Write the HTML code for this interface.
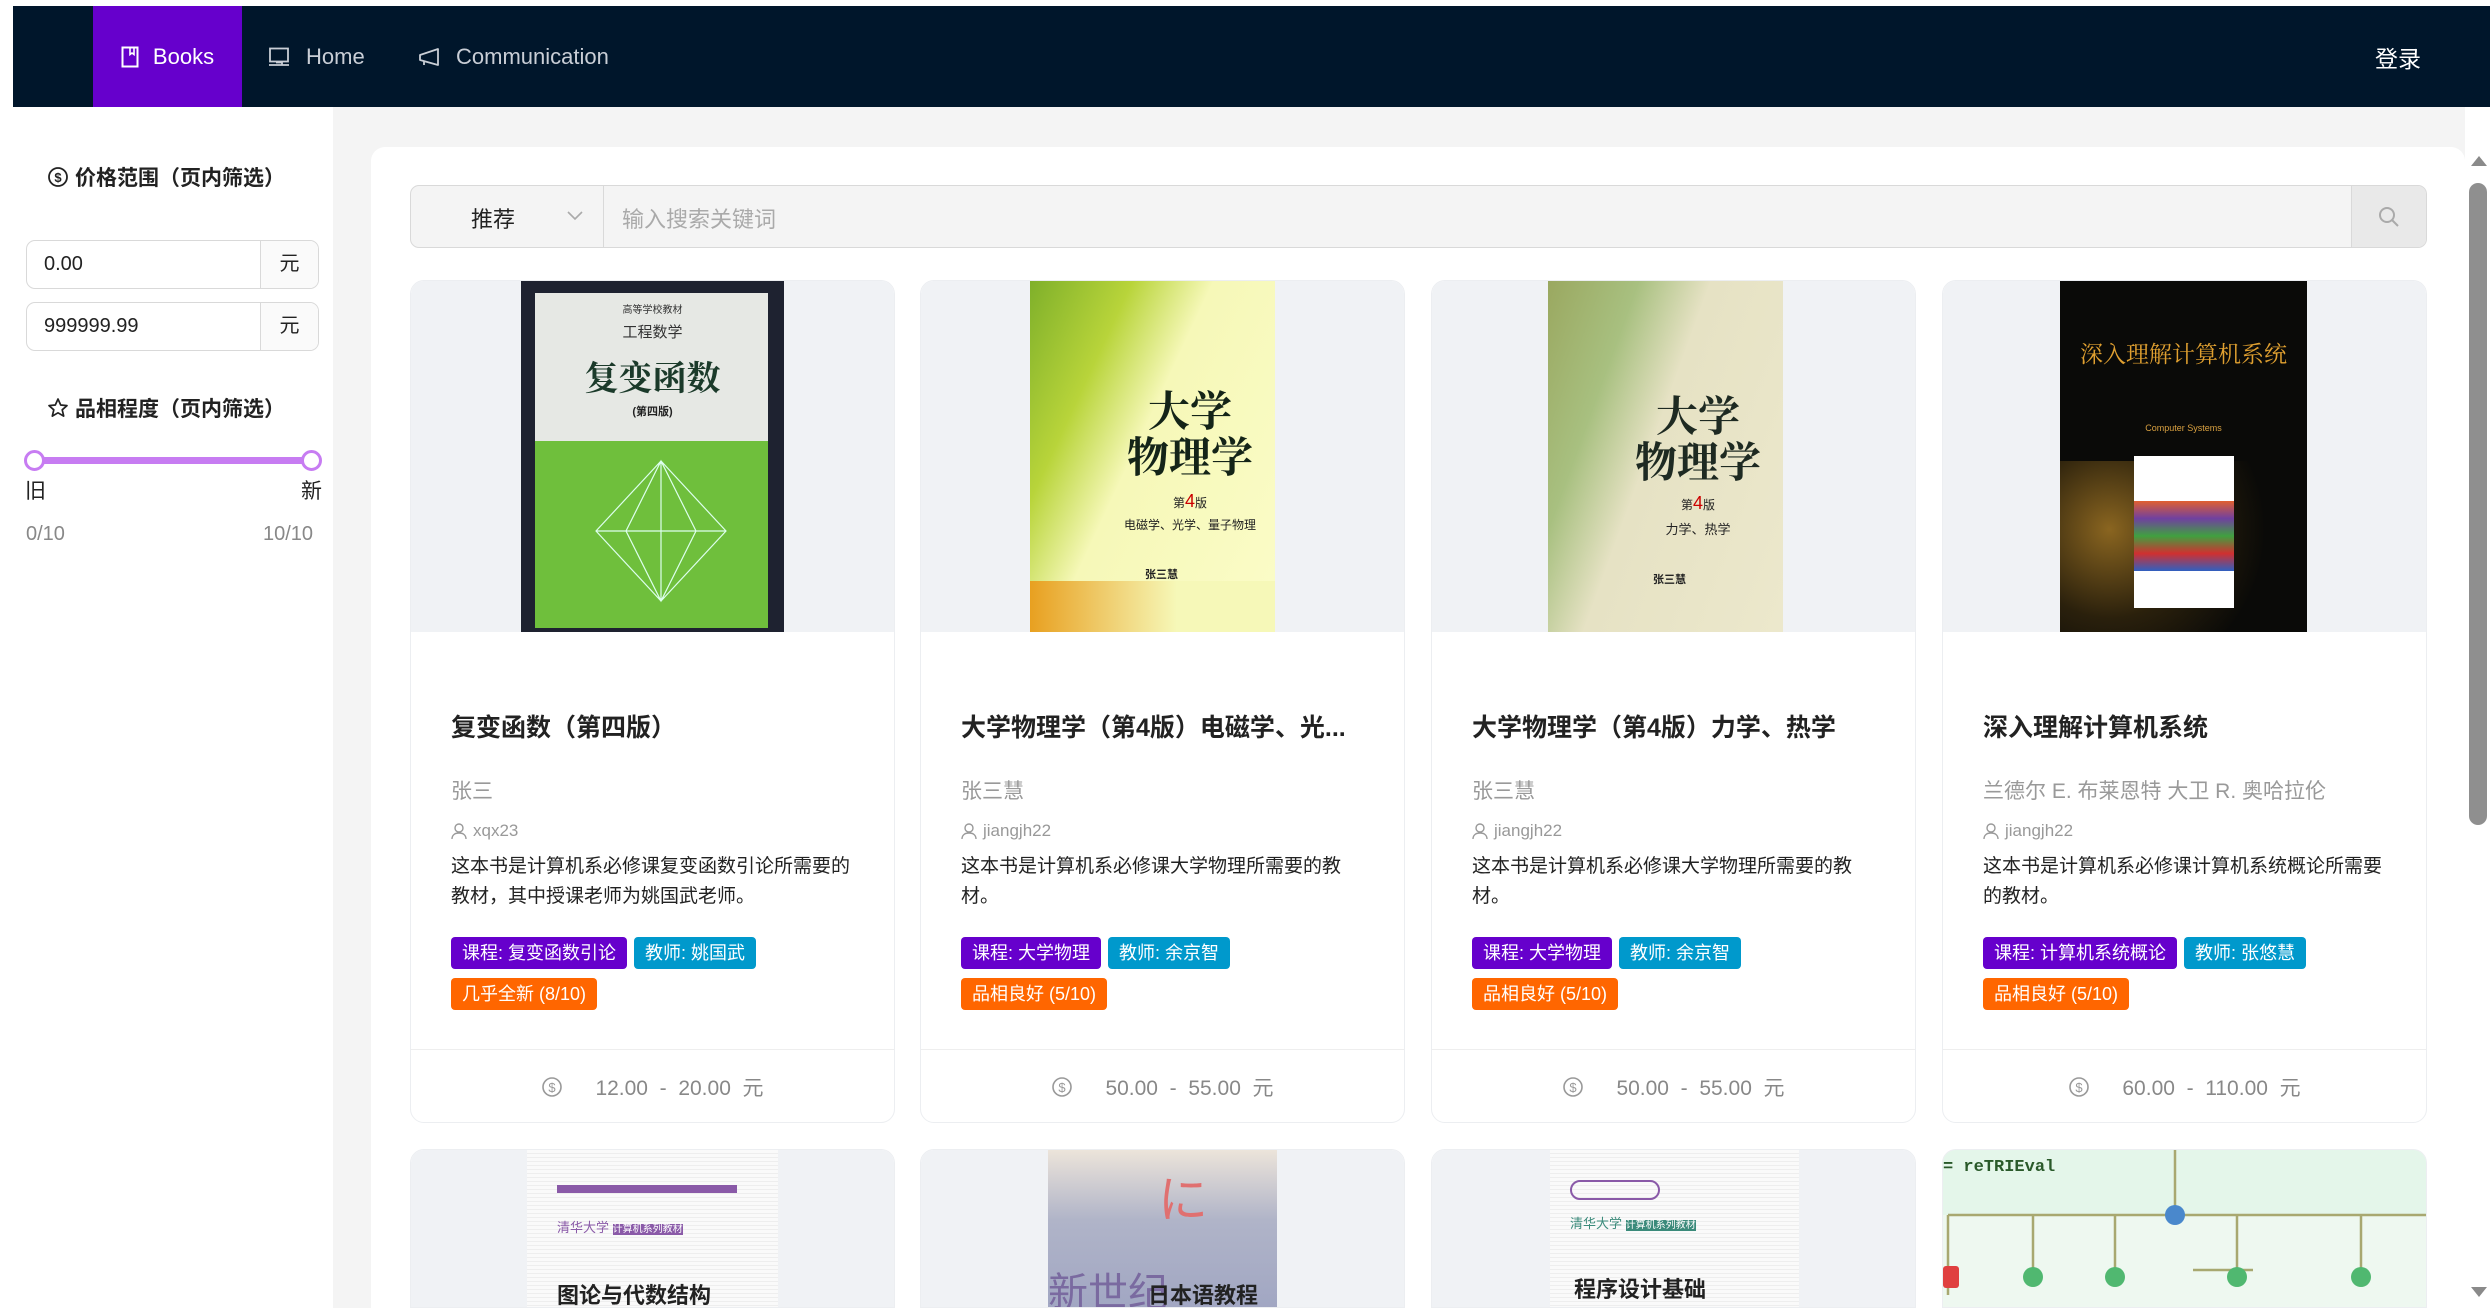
<!DOCTYPE html>
<html style="overflow:hidden;width:2492px;height:1308px"><head><meta charset="utf-8"><style>
*{box-sizing:border-box;margin:0;padding:0}
body{width:2492px;height:1308px;overflow:hidden;background:#fff;font-family:"Liberation Sans","Noto Sans CJK SC",sans-serif;position:relative;color:#222}
.abs{position:absolute}
.nav{left:13px;top:6px;width:2477px;height:101px;background:#00162b}
.navi{position:absolute;top:0;height:101px;display:flex;align-items:center;color:#c9ced6;font-size:22px}
.side{left:13px;top:107px;width:320px;height:1201px;background:#fff}
.main{left:333px;top:107px;width:2132px;height:1201px;background:#f4f4f4}
.panel{left:371px;top:147px;width:2094px;height:1161px;background:#fff;border-radius:14px 14px 0 0}
.h{font-size:21px;font-weight:bold;display:flex;align-items:center;gap:6px}
.inp{left:26px;width:293px;height:49px;border:1px solid #d9d9d9;border-radius:9px;display:flex;font-size:20px;overflow:hidden}
.inp span{flex:1;padding-left:17px;line-height:47px}
.inp b{width:58px;border-left:1px solid #d9d9d9;background:#fafafa;font-weight:normal;text-align:center;line-height:47px}
.card{width:485px;height:843px;border:1px solid #eceef1;border-radius:14px;background:#fff;overflow:hidden}
.img{position:absolute;left:0;top:0;width:100%;height:351px;background:#f0f2f5}
.cv{position:absolute;top:0;height:351px;overflow:hidden}
.t{position:absolute;left:40px;top:427px;font-size:25px;font-weight:bold;white-space:nowrap}
.au{position:absolute;left:40px;top:494px;font-size:21px;color:#999}
.se{position:absolute;left:40px;top:540px;font-size:17px;color:#999;display:flex;align-items:center;gap:6px}
.de{position:absolute;left:40px;top:571px;width:406px;font-size:19px;line-height:30px;color:#222}
.tags{position:absolute;left:40px;top:656px;width:420px;display:flex;flex-wrap:wrap;gap:9px 7px}
.tg{height:32px;line-height:32px;padding:0 11px;border-radius:4px;color:#fff;font-size:18px}
.p{background:#6600cc}.c{background:#0099cc}.o{background:#ff6600}
.ft{position:absolute;left:0;top:768px;width:100%;border-top:1px solid #eee;height:75px;display:flex;align-items:center;justify-content:center;gap:14px;color:#888;font-size:21px}
.card2{height:159px;border-radius:14px 14px 0 0}
</style></head><body>
<div class="abs nav">
  <div class="navi" style="left:80px;width:149px;background:#6600cc;color:#fff;justify-content:center;gap:14px">
    <svg width="18" height="22" viewBox="0 0 18 22"><rect x="1.5" y="1.5" width="15" height="19" fill="none" stroke="#fff" stroke-width="2"/><path d="M9 1.5v7l2-1.5 2 1.5v-7" fill="none" stroke="#fff" stroke-width="1.6"/></svg>Books</div>
  <div class="navi" style="left:255px;gap:16px"><svg width="22" height="20" viewBox="0 0 22 20"><rect x="2" y="1.5" width="18" height="13" fill="none" stroke="#c9ced6" stroke-width="1.8"/><path d="M1 18h20M8 15.5h6v2.5" fill="none" stroke="#c9ced6" stroke-width="1.8"/></svg>Home</div>
  <div class="navi" style="left:405px;gap:16px"><svg width="22" height="20" viewBox="0 0 22 20"><path d="M2 8v5l18 5V2z M6 14v4" fill="none" stroke="#c9ced6" stroke-width="1.8" stroke-linejoin="round"/></svg>Communication</div>
  <div class="navi" style="left:2362px;color:#fff;font-size:23px">登录</div>
</div>
<div class="abs side">
  <div class="abs h" style="left:34px;top:55px"><svg width="22" height="22" viewBox="0 0 22 22"><circle cx="11" cy="11" r="9" fill="none" stroke="#222" stroke-width="1.8"/><text x="11" y="16" font-size="13" text-anchor="middle" font-family="Liberation Sans" fill="#222">$</text></svg>价格范围（页内筛选）</div>
  <div class="abs inp" style="top:133px;left:13px"><span>0.00</span><b>元</b></div>
  <div class="abs inp" style="top:195px;left:13px"><span>999999.99</span><b>元</b></div>
  <div class="abs h" style="left:34px;top:286px"><svg width="22" height="22" viewBox="0 0 22 22"><path d="M11 2l2.7 6 6.3.6-4.8 4.2 1.5 6.3L11 15.8 5.3 19.1l1.5-6.3L2 8.6 8.3 8z" fill="none" stroke="#222" stroke-width="1.7" stroke-linejoin="round"/></svg>品相程度（页内筛选）</div>
  <div class="abs" style="left:22px;top:350px;width:277px;height:7px;background:#c77cf2;border-radius:3px"></div>
  <div class="abs" style="left:11px;top:343px;width:21px;height:21px;border:3px solid #c77cf2;border-radius:50%;background:#fff"></div>
  <div class="abs" style="left:288px;top:343px;width:21px;height:21px;border:3px solid #c77cf2;border-radius:50%;background:#fff"></div>
  <div class="abs" style="left:12px;top:368px;font-size:21px">旧</div>
  <div class="abs" style="left:288px;top:368px;font-size:21px">新</div>
  <div class="abs" style="left:13px;top:416px;font-size:20px;color:#888">0/10</div>
  <div class="abs" style="left:250px;top:416px;font-size:20px;color:#888">10/10</div>
</div>
<div class="abs main"></div>
<div class="abs panel"></div>
<div class="abs" style="left:410px;top:185px;width:2017px;height:63px;background:#f4f4f4;border:1px solid #d9d9d9;border-radius:9px;overflow:hidden">
  <div class="abs" style="left:60px;top:16px;font-size:22px">推荐</div>
  <svg class="abs" style="left:155px;top:24px" width="18" height="12" viewBox="0 0 18 12"><path d="M2 2l7 7 7-7" fill="none" stroke="#aaa" stroke-width="1.6"/></svg>
  <div class="abs" style="left:192px;top:0;width:1px;height:63px;background:#d9d9d9"></div>
  <div class="abs" style="left:211px;top:16px;font-size:22px;color:#aaa">输入搜索关键词</div>
  <div class="abs" style="left:1940px;top:0;width:77px;height:63px;background:#e9e9e9;border-left:1px solid #d9d9d9"></div>
  <svg class="abs" style="left:1966px;top:19px" width="24" height="24" viewBox="0 0 24 24"><circle cx="10" cy="10" r="7" fill="none" stroke="#aaa" stroke-width="2"/><path d="M15 15l6 6" stroke="#aaa" stroke-width="2"/></svg>
</div>

<!-- row 1 -->
<div class="abs card" style="left:410px;top:280px">
  <div class="img"></div>
  <div class="cv" style="left:110px;width:263px;background:#1e2230">
    <div class="abs" style="left:14px;top:12px;width:233px;height:335px;background:#e6e8e4"></div>
    <div class="abs" style="left:14px;top:160px;width:233px;height:187px;background:#6fbf3c"></div>
    <div class="abs" style="left:0;top:20px;width:263px;text-align:center;font-size:10px;color:#333">高等学校教材</div>
    <div class="abs" style="left:0;top:40px;width:263px;text-align:center;font-size:15px;color:#333">工程数学</div>
    <div class="abs" style="left:0;top:70px;width:263px;text-align:center;font-size:34px;font-weight:bold;color:#1b3a2a;font-family:'Noto Serif CJK SC',serif">复变函数</div>
    <div class="abs" style="left:0;top:122px;width:263px;text-align:center;font-size:11px;font-weight:bold">(第四版)</div>
    <svg class="abs" style="left:70px;top:175px" width="140" height="150" viewBox="0 0 140 150"><path d="M70 5L5 75 70 145 135 75z M70 5L35 75 70 145 105 75z M70 5v140 M5 75h130" fill="none" stroke="#dfe" stroke-width="1.2"/></svg>
  </div>
  <div class="t">复变函数（第四版）</div>
  <div class="au">张三</div>
  <div class="se"><svg width="16" height="17" viewBox="0 0 16 17"><circle cx="8" cy="5" r="4" fill="none" stroke="#999" stroke-width="1.4"/><path d="M1 16c0-4 3-6 7-6s7 2 7 6" fill="none" stroke="#999" stroke-width="1.4"/></svg>xqx23</div>
  <div class="de">这本书是计算机系必修课复变函数引论所需要的教材，其中授课老师为姚国武老师。</div>
  <div class="tags"><span class="tg p">课程: 复变函数引论</span><span class="tg c">教师: 姚国武</span><span class="tg o">几乎全新 (8/10)</span></div>
  <div class="ft"><svg width="22" height="22" viewBox="0 0 22 22"><circle cx="11" cy="11" r="9" fill="none" stroke="#999" stroke-width="1.6"/><text x="11" y="16" font-size="13" text-anchor="middle" fill="#999">$</text></svg><span style="margin-left:18px">12.00 &nbsp;- &nbsp;20.00 &nbsp;元</span></div>
</div>

<div class="abs card" style="left:920px;top:280px">
  <div class="img"></div>
  <div class="cv" style="left:109px;width:245px;background:linear-gradient(115deg,#7fb02a 0%,#b8d43a 25%,#f6f8b8 45%,#fbfcc8 100%)">
    <div class="abs" style="left:0;top:300px;width:245px;height:51px;background:linear-gradient(90deg,#e8a020,#f6f8b8 60%)"></div>
    <div class="abs" style="left:95px;top:105px;font-size:42px;font-weight:bold;line-height:46px;color:#142418;font-family:'Noto Serif CJK SC',serif;text-align:center;width:130px">大学<br>物理学</div>
    <div class="abs" style="left:95px;top:210px;width:130px;text-align:center;font-size:12px;color:#222">第<span style="color:#c00;font-size:18px">4</span>版</div>
    <div class="abs" style="left:85px;top:235px;width:150px;text-align:center;font-size:12px;color:#222">电磁学、光学、量子物理</div>
    <div class="abs" style="left:115px;top:285px;font-size:11px;font-weight:bold">张三慧</div>
  </div>
  <div class="t">大学物理学（第4版）电磁学、光...</div>
  <div class="au">张三慧</div>
  <div class="se"><svg width="16" height="17" viewBox="0 0 16 17"><circle cx="8" cy="5" r="4" fill="none" stroke="#999" stroke-width="1.4"/><path d="M1 16c0-4 3-6 7-6s7 2 7 6" fill="none" stroke="#999" stroke-width="1.4"/></svg>jiangjh22</div>
  <div class="de">这本书是计算机系必修课大学物理所需要的教材。</div>
  <div class="tags"><span class="tg p">课程: 大学物理</span><span class="tg c">教师: 余京智</span><span class="tg o">品相良好 (5/10)</span></div>
  <div class="ft"><svg width="22" height="22" viewBox="0 0 22 22"><circle cx="11" cy="11" r="9" fill="none" stroke="#999" stroke-width="1.6"/><text x="11" y="16" font-size="13" text-anchor="middle" fill="#999">$</text></svg><span style="margin-left:18px">50.00 &nbsp;- &nbsp;55.00 &nbsp;元</span></div>
</div>

<div class="abs card" style="left:1431px;top:280px">
  <div class="img"></div>
  <div class="cv" style="left:116px;width:235px;background:linear-gradient(110deg,#9aa860 0%,#a8c080 25%,#e6e2c4 45%,#ece8cc 100%)">
    <div class="abs" style="left:85px;top:110px;font-size:42px;font-weight:bold;line-height:46px;color:#1e2a22;font-family:'Noto Serif CJK SC',serif;text-align:center;width:130px">大学<br>物理学</div>
    <div class="abs" style="left:85px;top:212px;width:130px;text-align:center;font-size:12px">第<span style="color:#c00;font-size:18px">4</span>版</div>
    <div class="abs" style="left:85px;top:238px;width:130px;text-align:center;font-size:13px">力学、热学</div>
    <div class="abs" style="left:105px;top:290px;font-size:11px;font-weight:bold">张三慧</div>
  </div>
  <div class="t">大学物理学（第4版）力学、热学</div>
  <div class="au">张三慧</div>
  <div class="se"><svg width="16" height="17" viewBox="0 0 16 17"><circle cx="8" cy="5" r="4" fill="none" stroke="#999" stroke-width="1.4"/><path d="M1 16c0-4 3-6 7-6s7 2 7 6" fill="none" stroke="#999" stroke-width="1.4"/></svg>jiangjh22</div>
  <div class="de">这本书是计算机系必修课大学物理所需要的教材。</div>
  <div class="tags"><span class="tg p">课程: 大学物理</span><span class="tg c">教师: 余京智</span><span class="tg o">品相良好 (5/10)</span></div>
  <div class="ft"><svg width="22" height="22" viewBox="0 0 22 22"><circle cx="11" cy="11" r="9" fill="none" stroke="#999" stroke-width="1.6"/><text x="11" y="16" font-size="13" text-anchor="middle" fill="#999">$</text></svg><span style="margin-left:18px">50.00 &nbsp;- &nbsp;55.00 &nbsp;元</span></div>
</div>

<div class="abs card" style="left:1942px;top:280px">
  <div class="img"></div>
  <div class="cv" style="left:117px;width:247px;background:#0a0a08">
    <div class="abs" style="left:0;top:180px;width:247px;height:171px;background:radial-gradient(circle at 20% 40%,#8a6520 0,#2a200c 40%,#0a0a08 70%),#0a0a08"></div>
    <div class="abs" style="left:0;top:55px;width:247px;text-align:center;font-size:23px;color:#e0a030;font-family:'Noto Serif CJK SC',serif">深入理解计算机系统</div>
    <div class="abs" style="left:0;top:142px;width:247px;text-align:center;font-size:9px;color:#d8a040">Computer Systems</div>
    <div class="abs" style="left:74px;top:175px;width:100px;height:152px;background:#fff"><div style="margin-top:45px;height:70px;background:linear-gradient(180deg,#e06030,#7040a0,#40a040,#d03030,#3060c0)"></div></div>
  </div>
  <div class="t">深入理解计算机系统</div>
  <div class="au">兰德尔 E. 布莱恩特 大卫 R. 奥哈拉伦</div>
  <div class="se"><svg width="16" height="17" viewBox="0 0 16 17"><circle cx="8" cy="5" r="4" fill="none" stroke="#999" stroke-width="1.4"/><path d="M1 16c0-4 3-6 7-6s7 2 7 6" fill="none" stroke="#999" stroke-width="1.4"/></svg>jiangjh22</div>
  <div class="de">这本书是计算机系必修课计算机系统概论所需要的教材。</div>
  <div class="tags"><span class="tg p">课程: 计算机系统概论</span><span class="tg c">教师: 张悠慧</span><span class="tg o">品相良好 (5/10)</span></div>
  <div class="ft"><svg width="22" height="22" viewBox="0 0 22 22"><circle cx="11" cy="11" r="9" fill="none" stroke="#999" stroke-width="1.6"/><text x="11" y="16" font-size="13" text-anchor="middle" fill="#999">$</text></svg><span style="margin-left:18px">60.00 &nbsp;- &nbsp;110.00 &nbsp;元</span></div>
</div>

<!-- row 2 -->
<div class="abs card card2" style="left:410px;top:1149px">
  <div class="img" style="height:200px"></div>
  <div class="cv" style="left:116px;width:251px;height:200px;background:repeating-linear-gradient(180deg,#fafafa 0,#fafafa 3px,#eee 3px,#eee 4px)">
    <div class="abs" style="left:30px;top:35px;width:180px;height:8px;background:#8a5aa8"></div>
    <div class="abs" style="left:30px;top:67px;font-size:13px;color:#8a5aa8">清华大学 <span style="background:#8a5aa8;color:#fff;font-size:10px">计算机系列教材</span></div>
    <div class="abs" style="left:30px;top:128px;font-size:22px;font-weight:bold">图论与代数结构</div>
  </div>
</div>
<div class="abs card card2" style="left:920px;top:1149px">
  <div class="img" style="height:200px"></div>
  <div class="cv" style="left:127px;width:229px;height:200px;background:linear-gradient(180deg,#ece4da 0,#b0b4c8 35%,#9aa0c0 100%)">
    <div class="abs" style="left:110px;top:10px;font-size:50px;color:#e07070">に</div>
    <div class="abs" style="left:0;top:110px;font-size:40px;color:#7a6aa0">新世纪</div>
    <div class="abs" style="left:100px;top:128px;font-size:22px;font-weight:bold;color:#222">日本语教程</div>
  </div>
</div>
<div class="abs card card2" style="left:1431px;top:1149px">
  <div class="img" style="height:200px"></div>
  <div class="cv" style="left:118px;width:249px;height:200px;background:repeating-linear-gradient(180deg,#fafafa 0,#fafafa 3px,#eee 3px,#eee 4px)">
    <div class="abs" style="left:20px;top:30px;width:90px;height:20px;border:2px solid #8a5aa8;border-radius:10px"></div>
    <div class="abs" style="left:20px;top:63px;font-size:13px;color:#3a8a7a">清华大学 <span style="background:#3a8a7a;color:#fff;font-size:10px">计算机系列教材</span></div>
    <div class="abs" style="left:24px;top:122px;font-size:22px;font-weight:bold">程序设计基础</div>
    <div class="abs" style="left:135px;top:178px;width:114px;height:22px;background:#d0d0d0"></div>
  </div>
</div>
<div class="abs card card2" style="left:1942px;top:1149px;background:#eef8f0">
  <div class="abs" style="left:0;top:0;width:485px;height:65px;background:#e4f6ea"></div>
  <div class="abs" style="left:0;top:8px;font-size:17px;font-family:'Liberation Mono',monospace;color:#2a5a2a;font-weight:bold">= reTRIEval</div>
  <svg class="abs" style="left:0;top:0" width="485" height="200"><path d="M232 0v60M5 65h480M5 65v80M90 65v70M172 65v70M294 65v70M418 65v70M250 120h60" stroke="#a8a870" stroke-width="2.5" fill="none"/><circle cx="232" cy="65" r="10" fill="#4a88cc"/><rect x="0" y="116" width="16" height="22" rx="3" fill="#e04040"/><circle cx="90" cy="127" r="10" fill="#50b870"/><circle cx="172" cy="127" r="10" fill="#50b870"/><circle cx="294" cy="127" r="10" fill="#50b870"/><circle cx="418" cy="127" r="10" fill="#50b870"/></svg>
</div>

<!-- scrollbar -->
<div class="abs" style="left:2465px;top:147px;width:27px;height:1161px;background:#fff"></div>
<svg class="abs" style="left:2470px;top:155px" width="18" height="12"><path d="M9 1L17 11H1z" fill="#8a8a8a"/></svg>
<div class="abs" style="left:2469px;top:183px;width:18px;height:642px;background:#8f8f8f;border-radius:9px"></div>
<svg class="abs" style="left:2470px;top:1286px" width="18" height="12"><path d="M1 1H17L9 11z" fill="#8a8a8a"/></svg>
</body></html>
